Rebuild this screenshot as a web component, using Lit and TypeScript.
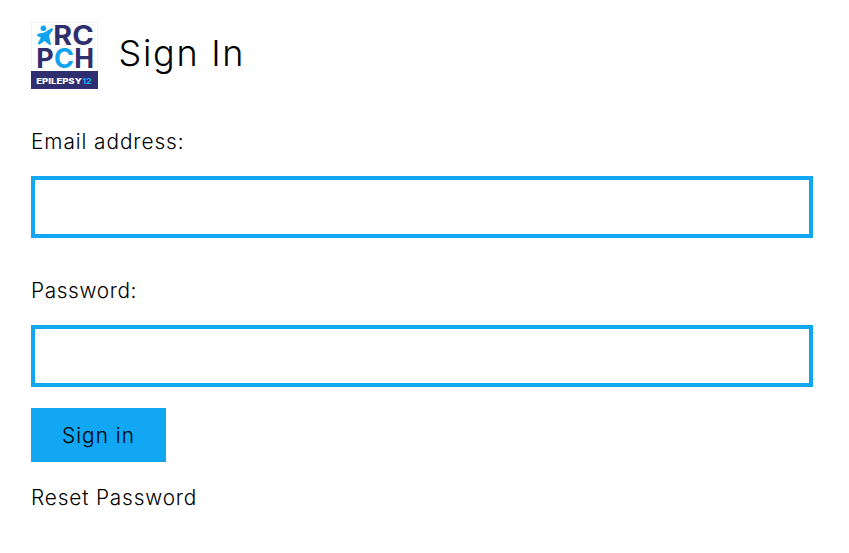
import { LitElement, html, css } from "lit";
import { customElement } from "lit/decorators.js";

@customElement("app-logo")
class AppLogo extends LitElement {
  static styles = css`
    :host { display: block; width: 67px; height: 67px; }
    svg { display: block; overflow: visible; font-family: Inter, "Liberation Sans", sans-serif; font-weight: 700; }
    .big { font-size: 26.5px; fill: #2f2e6e; }
    .small { font-size: 8px; font-weight: 800; fill: #fff; }
    .cyan { fill: #12a3ed; }
  `;
  render() {
    return html`
      <svg width="67" height="67" viewBox="0 0 67 67" role="img" aria-label="RCPCH Epilepsy12">
        <rect x=".5" y=".5" width="66" height="66" fill="#fff" stroke="#f1f1f1" />
        <circle cx="12.4" cy="6.2" r="2.8" fill="#12a3ed" />
        <path fill="#12a3ed" d="M6.2 12 L13.2 10.6 L20.8 6 L22.2 7.6 L18 13.4 L20 22.6 L18.6 23.1 L13.6 19 L8 22.8 L6.8 21.6 L9.8 15.8 L6.2 13.8 Z" />
        <text class="big" x="22.2" y="22.8" textLength="18.8" lengthAdjust="spacingAndGlyphs">R</text>
        <text class="big" x="41.2" y="22.8" textLength="21.5" lengthAdjust="spacingAndGlyphs">C</text>
        <text class="big" x="5.3" y="46" textLength="17.4" lengthAdjust="spacingAndGlyphs">P</text>
        <text class="big cyan" x="22.9" y="46" textLength="20" lengthAdjust="spacingAndGlyphs">C</text>
        <text class="big" x="43.2" y="46" textLength="19.8" lengthAdjust="spacingAndGlyphs">H</text>
        <rect y="49" width="67" height="18" fill="#2f2e6e" />
        <text class="small" x="5.3" y="61.8" textLength="45.5" lengthAdjust="spacingAndGlyphs">EPILEPSY</text>
        <text class="small cyan" x="51.2" y="61.8" textLength="9.6" lengthAdjust="spacingAndGlyphs">12</text>
      </svg>
    `;
  }
}

@customElement("app-root")
class AppRoot extends LitElement {
  static styles = css`
    :host {
      display: block;
      box-sizing: border-box;
      height: 553px;
      padding: 22px 36px 0 31px;
      background: #fff;
      color: #000;
      font: 350 20.8px/26px Inter, "Liberation Sans", sans-serif;
    }
    header { display: flex; align-items: center; height: 67px; gap: 20.5px; }
    h1 { margin: 0; padding-bottom: 5px; font-size: 36px; line-height: 44px; font-weight: 300; letter-spacing: 1.7px; }
    form { display: flex; flex-direction: column; align-items: flex-start; padding-top: 40px; }
    label { height: 26px; }
    .email { letter-spacing: .93px; }
    .password { letter-spacing: .63px; }
    input {
      box-sizing: border-box;
      width: 782px;
      height: 62px;
      margin: 21px 0 40px;
      padding: 0 16px;
      border: 4px solid #11a7f2;
      border-radius: 0;
      background: #fff;
      font: inherit;
      outline: none;
    }
    .last { margin-bottom: 21px; }
    button {
      width: 135px;
      height: 54px;
      padding: 2px 0 0;
      border: 0;
      background: #11a7f2;
      color: #000;
      font: inherit;
      letter-spacing: 1.05px;
    }
    a { margin-top: 23px; color: #000; text-decoration: none; letter-spacing: .85px; }
  `;
  render() {
    return html`
      <header><app-logo></app-logo><h1>Sign In</h1></header>
      <form>
        <label class="email" for="email">Email address:</label>
        <input id="email" type="email" />
        <label class="password" for="password">Password:</label>
        <input id="password" class="last" type="password" />
        <button type="button">Sign in</button>
        <a href="#">Reset Password</a>
      </form>
    `;
  }
}
